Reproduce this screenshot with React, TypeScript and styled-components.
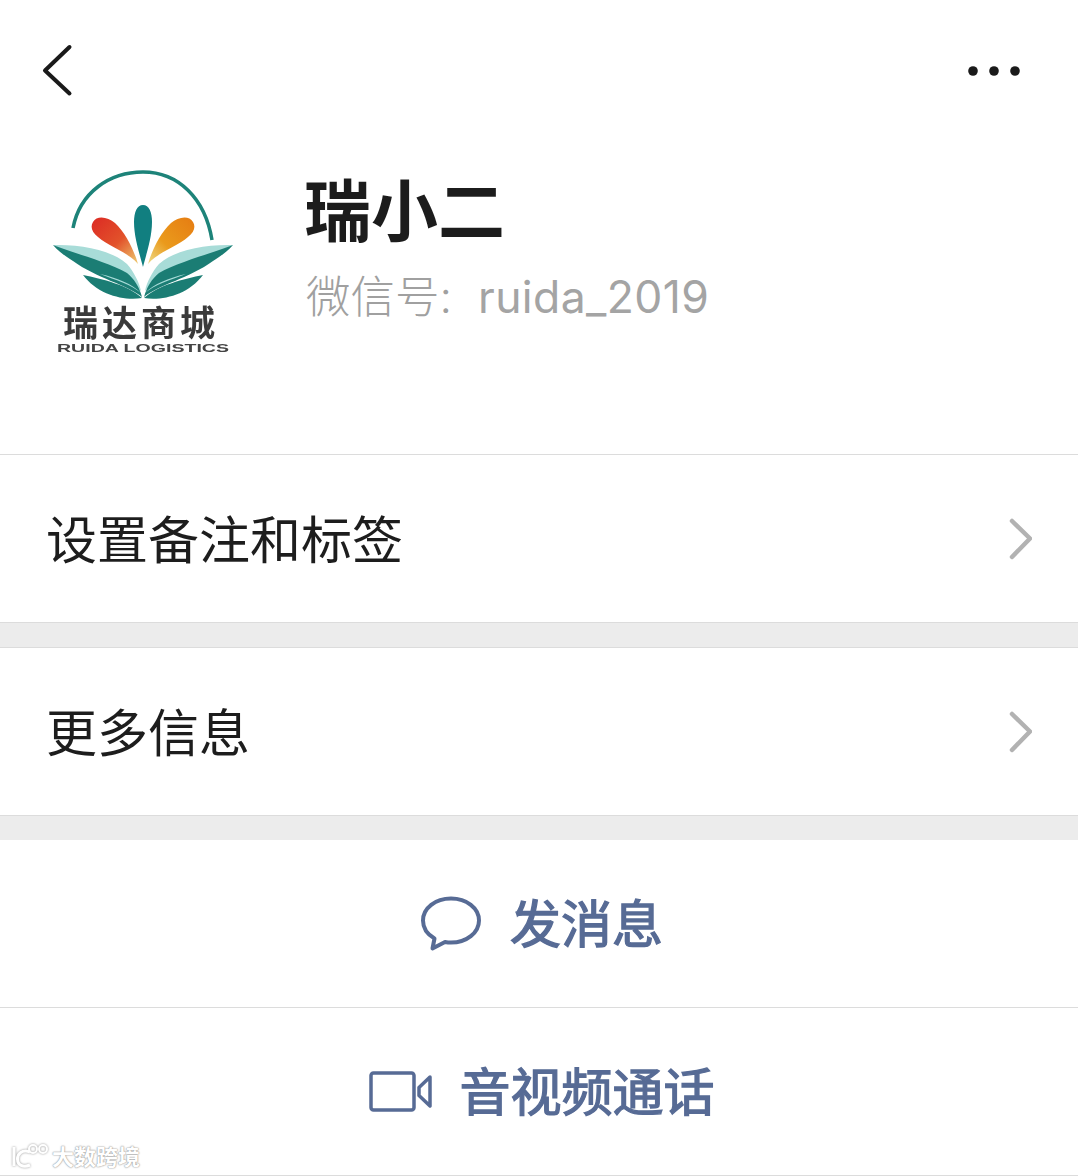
import React from "react";
import styled, { createGlobalStyle } from "styled-components";

const CJK = `"Noto Sans CJK SC", "Liberation Sans", sans-serif`;
const LINE = "#dcdcdc";
const LINK = "#576b95";

const GlobalStyle = createGlobalStyle`
  html, body {
    margin: 0;
    padding: 0;
    background: #fff;
  }
  body {
    font-family: ${CJK};
  }
`;

const Page = styled.div`
  position: relative;
  width: 1078px;
  height: 1176px;
  overflow: hidden;
  background: #fff;
`;

const NavBar = styled.header`
  display: flex;
  align-items: center;
  justify-content: space-between;
  height: 141px;
  padding: 0 58px 0 42px;
  box-sizing: border-box;
`;

const NavButton = styled.button`
  display: flex;
  padding: 0;
  border: 0;
  background: none;
`;

const Profile = styled.section`
  display: flex;
  align-items: flex-start;
  height: 313px;
  padding-left: 46px;
  box-sizing: border-box;
`;

const LogoFrame = styled.svg`
  margin-top: 19px;
  filter: blur(0.6px);
`;

const ProfileText = styled.div`
  display: flex;
  flex-direction: column;
  margin-left: 68px;
  padding-top: 26px;
`;

const Name = styled.h1`
  margin: 0;
  font-size: 67px;
  line-height: 80px;
  font-weight: 700;
  color: #1c1c1c;
`;

const WechatId = styled.p`
  margin: 20px 0 0;
  padding-left: 2px;
  font-family: Inter, ${CJK};
  font-size: 44.5px;
  line-height: 60px;
  font-weight: 300;
  color: #a0a0a0;
  white-space: nowrap;
`;

const WechatValue = styled.span`
  margin-left: 13px;
  font-weight: 400;
  letter-spacing: 0.4px;
  color: #a4a4a4;
`;

const Row = styled.div`
  display: flex;
  align-items: center;
  justify-content: space-between;
  height: 168px;
  padding: 0 46px;
  box-sizing: border-box;
  border-top: 1px solid ${LINE};
  background: #fff;
`;

const RowLabel = styled.span`
  margin-bottom: 3px;
  font-size: 51px;
  line-height: 60px;
  font-weight: 400;
  color: #1d1d1d;
`;

const Gap = styled.div`
  height: 24px;
  background: #ececec;
  border-top: 1px solid ${LINE};
`;

const ActionRow = styled.div<{ $divider?: boolean; $gap: number }>`
  display: flex;
  align-items: center;
  justify-content: center;
  gap: ${(p) => p.$gap}px;
  height: ${(p) => (p.$divider ? 168 : 167)}px;
  padding-left: 6px;
  box-sizing: border-box;
  border-top: ${(p) => (p.$divider ? `1px solid ${LINE}` : "0")};
  background: #fff;
`;

const ActionLabel = styled.span`
  margin-bottom: 5px;
  font-size: 51px;
  line-height: 60px;
  font-weight: 400;
  color: ${LINK};
  -webkit-text-stroke: 1.3px ${LINK};
`;

const BottomLine = styled.div`
  height: 1px;
  background: ${LINE};
`;

const Watermark = styled.div`
  position: absolute;
  left: 8px;
  bottom: 6px;
  display: flex;
  align-items: center;
  gap: 2px;
`;

const WatermarkMarkSvg = styled.svg`
  filter: drop-shadow(0 0 1px #999);
`;

const WatermarkText = styled.span`
  font-size: 22px;
  line-height: 30px;
  font-weight: 700;
  color: #fff;
  text-shadow: 0 0 2px #9a9a9a, 0 0 1px #8a8a8a;
`;

const BackIcon = () => (
  <svg width="32" height="54" viewBox="0 0 32 54" fill="none">
    <path d="M27.5 3 L3 26.5 L27.5 49.5" stroke="#1a1a1a" strokeWidth="4" strokeLinecap="round" strokeLinejoin="round" />
  </svg>
);

const MoreIcon = () => (
  <svg width="52" height="12" viewBox="0 0 52 12" fill="#1a1a1a">
    <circle cx="5" cy="6" r="4.8" />
    <circle cx="26" cy="6" r="4.8" />
    <circle cx="47" cy="6" r="4.8" />
  </svg>
);

const Chevron = () => (
  <svg width="24" height="42" viewBox="0 0 24 42" fill="none">
    <path d="M4 3 L22 20.5 L4 39" stroke="#b2b2b2" strokeWidth="4.5" strokeLinecap="round" strokeLinejoin="round" />
  </svg>
);

const ChatIcon = () => (
  <svg width="60" height="56" viewBox="0 0 60 56" fill="none">
    <path
      d="M30 2.5 C14.5 2.5 2 12 2 24.5 C2 32 6.5 38.5 13.5 42.5 L11.5 52.5 L24 46 C26 46.4 28 46.6 30 46.6 C45.5 46.6 58 36.8 58 24.5 C58 12 45.5 2.5 30 2.5 Z"
      stroke={LINK}
      strokeWidth="4"
      strokeLinejoin="round"
    />
  </svg>
);

const VideoIcon = () => (
  <svg width="64" height="42" viewBox="0 0 64 42" fill="none">
    <rect x="2" y="2" width="43" height="37" rx="2.5" stroke={LINK} strokeWidth="3.5" />
    <path d="M61 6 L50 16.5 L50 24.5 L61 35 Z" stroke={LINK} strokeWidth="3.5" strokeLinejoin="round" />
  </svg>
);

// one half of the flower; the other half is the same thing mirrored
const LogoHalf = ({ petal }: { petal: string }) => (
  <>
    <path
      d="M93 222 C97 215 108 217 115 223 C125 232 134 250 138 264 C128 252 108 246 98 237 C92 232 90 227 93 222 Z"
      fill={petal}
    />
    <path d="M53 245 C80 244 112 250 127 264 C134 272 139 282 141 291 C128 278 100 266 53 245 Z" fill="#a8dcd8" />
    <path d="M53 245 C76 254 108 262 127 273 C134 279 139 286 142 297 C128 285 96 278 73 261 C65 256 58 251 53 245 Z" fill="#1b7d74" />
    <path d="M100 274 C118 278 132 284 141 293 C132 285 116 280 100 274 Z" fill="#a8dcd8" />
    <path d="M83 275 C102 279 128 285 142 298 C124 301 98 295 83 275 Z" fill="#1b7d74" />
  </>
);

const Logo = () => (
  <LogoFrame width="190" height="200" viewBox="46 160 190 200">
    <defs>
      <linearGradient id="redPetal" x1="0" y1="0" x2="1" y2="1">
        <stop offset="0" stopColor="#dc2a24" />
        <stop offset="0.55" stopColor="#e2522a" />
        <stop offset="1" stopColor="#eecb70" />
      </linearGradient>
      <linearGradient id="orangePetal" x1="0" y1="0" x2="1" y2="1">
        <stop offset="0" stopColor="#e67c12" />
        <stop offset="0.6" stopColor="#ea9a1c" />
        <stop offset="1" stopColor="#eedc88" />
      </linearGradient>
    </defs>
    <path d="M73 228 C80 192 110 172 143 172 C178 172 205 198 212 240" fill="none" stroke="#1d8379" strokeWidth="3.5" />
    <path
      d="M143 205 C149 205 152 212 152 222 C152 238 146 255 143 267 C140 255 134 238 134 222 C134 212 137 205 143 205 Z"
      fill="#117f80"
    />
    <LogoHalf petal="url(#redPetal)" />
    <g transform="translate(286 0) scale(-1 1)">
      <LogoHalf petal="url(#orangePetal)" />
    </g>
    <text x="63" y="336" fontSize="35" fontWeight="700" fontFamily={CJK} fill="#3a3a3a" textLength="152">
      瑞达商城
    </text>
    <text
      x="57"
      y="352"
      fontSize="11"
      fontWeight="700"
      fontFamily={`"Liberation Sans", sans-serif`}
      fill="#444"
      textLength="172"
      lengthAdjust="spacingAndGlyphs"
    >
      RUIDA LOGISTICS
    </text>
  </LogoFrame>
);

const WatermarkMark = () => (
  <WatermarkMarkSvg width="42" height="28" viewBox="0 0 42 28" fill="none" stroke="#fff" strokeWidth="3">
    <path d="M6 6 L6 25" />
    <path d="M22 11 C14 8 9.5 13 9.5 18 C9.5 24 15 27 22 24" />
    <circle cx="25" cy="8" r="4" strokeWidth="2" />
    <circle cx="35" cy="8" r="4" strokeWidth="2" />
  </WatermarkMarkSvg>
);

export default function App() {
  return (
    <Page>
      <GlobalStyle />
      <NavBar>
        <NavButton>
          <BackIcon />
        </NavButton>
        <NavButton>
          <MoreIcon />
        </NavButton>
      </NavBar>
      <Profile>
        <Logo />
        <ProfileText>
          <Name>瑞小二</Name>
          <WechatId>
            微信号:<WechatValue> ruida_2019</WechatValue>
          </WechatId>
        </ProfileText>
      </Profile>
      <Row>
        <RowLabel>设置备注和标签</RowLabel>
        <Chevron />
      </Row>
      <Gap />
      <Row>
        <RowLabel>更多信息</RowLabel>
        <Chevron />
      </Row>
      <Gap />
      <ActionRow $gap={29}>
        <ChatIcon />
        <ActionLabel>发消息</ActionLabel>
      </ActionRow>
      <ActionRow $divider $gap={26}>
        <VideoIcon />
        <ActionLabel>音视频通话</ActionLabel>
      </ActionRow>
      <BottomLine />
      <Watermark>
        <WatermarkMark />
        <WatermarkText>大数跨境</WatermarkText>
      </Watermark>
    </Page>
  );
}
